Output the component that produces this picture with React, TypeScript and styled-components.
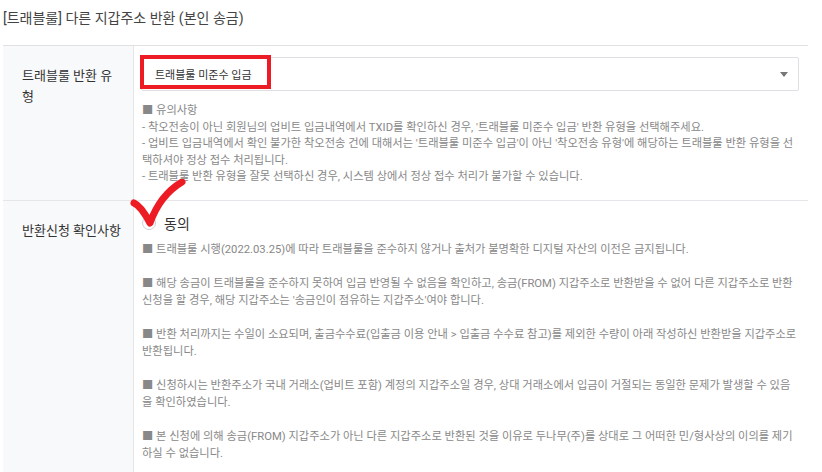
import React from 'react';
import styled, { createGlobalStyle } from 'styled-components';

const GlobalStyle = createGlobalStyle`
  body {
    margin: 0;
    background: #fff;
    font-family: Roboto, 'Noto Sans CJK KR', sans-serif;
  }
`;

const Page = styled.div`
  padding: 9px 14px 0 3px;
`;

const Title = styled.h1`
  margin: 0 0 18px 0;
  font-size: 14px;
  font-weight: 400;
  line-height: 18px;
  color: #444;
`;

const Table = styled.div`
  width: 805px;
  border-top: 1px solid #e1e1e4;
`;

const Row = styled.div`
  display: grid;
  grid-template-columns: 131px 1fr;
  border-bottom: 1px solid #e6e6ea;
`;

const Label = styled.div`
  background: #f8f9fb;
  border-right: 1px solid #e6e6ea;
  padding: 19px 10px 0 19px;
  font-size: 13px;
  line-height: 21px;
  color: #333;
`;

const Cell = styled.div<{ $top: number; $bottom: number }>`
  position: relative;
  padding: ${p => p.$top}px 9px ${p => p.$bottom}px 7px;
`;

const SelectBox = styled.div`
  position: relative;
  display: flex;
  align-items: center;
  justify-content: space-between;
  height: 32px;
  padding: 0 10px 0 13px;
  border: 1px solid #dedee3;
  border-radius: 2px;
  font-size: 11px;
  color: #333;
`;

const Caret = styled.span`
  width: 0;
  height: 0;
  border-left: 4px solid transparent;
  border-right: 4px solid transparent;
  border-top: 5px solid #777;
`;

const Highlight = styled.div`
  position: absolute;
  left: -2px;
  top: -3px;
  width: 123px;
  height: 26px;
  border: 4px solid #ed1c24;
  pointer-events: none;
`;

const Notes = styled.div`
  margin-top: 12px;
  font-size: 11.25px;
  line-height: 16.5px;
  color: #888;
  padding-left: 1px;
`;

const Agree = styled.label`
  display: flex;
  align-items: center;
  gap: 8px;
  height: 20px;
  padding-left: 1px;
  font-size: 14px;
  color: #333;
`;

const Radio = styled.span`
  width: 14px;
  height: 14px;
  border-radius: 50%;
  border: 1px solid #cfcfd4;
  background: #fff;
  box-sizing: border-box;
`;

const Para = styled.p`
  margin: 8px 0 17px 0;
  padding-left: 1px;
  font-size: 11.25px;
  line-height: 17px;
  color: #888;
  & + & {
    margin-top: 0;
  }
`;

const Check = styled.svg`
  position: absolute;
  left: -6px;
  top: -22px;
  pointer-events: none;
`;

const paragraphs = [
  '■ 트래블룰 시행(2022.03.25)에 따라 트래블룰을 준수하지 않거나 출처가 불명확한 디지털 자산의 이전은 금지됩니다.',
  "■ 해당 송금이 트래블룰을 준수하지 못하여 입금 반영될 수 없음을 확인하고, 송금(FROM) 지갑주소로 반환받을 수 없어 다른 지갑주소로 반환 신청을 할 경우, 해당 지갑주소는 '송금인이 점유하는 지갑주소'여야 합니다.",
  '■ 반환 처리까지는 수일이 소요되며, 출금수수료(입출금 이용 안내 > 입출금 수수료 참고)를 제외한 수량이 아래 작성하신 반환받을 지갑주소로 반환됩니다.',
  '■ 신청하시는 반환주소가 국내 거래소(업비트 포함) 계정의 지갑주소일 경우, 상대 거래소에서 입금이 거절되는 동일한 문제가 발생할 수 있음을 확인하였습니다.',
  '■ 본 신청에 의해 송금(FROM) 지갑주소가 아닌 다른 지갑주소로 반환된 것을 이유로 두나무(주)를 상대로 그 어떠한 민/형사상의 이의를 제기하실 수 없습니다.',
];

const App = () => (
  <Page>
    <GlobalStyle />
    <Title>[트래블룰] 다른 지갑주소 반환 (본인 송금)</Title>
    <Table>
      <Row>
        <Label>트래블룰 반환 유형</Label>
        <Cell $top={11} $bottom={14}>
          <SelectBox>
            <span>트래블룰 미준수 입금</span>
            <Caret />
            <Highlight />
          </SelectBox>
          <Notes>
            ■ 유의사항
            <br />
            - 착오전송이 아닌 회원님의 업비트 입금내역에서 TXID를 확인하신 경우, '트래블룰 미준수 입금' 반환 유형을 선택해주세요.
            <br />
            - 업비트 입금내역에서 확인 불가한 착오전송 건에 대해서는 '트래블룰 미준수 입금'이 아닌 '착오전송 유형'에 해당하는 트래블룰 반환 유형을 선택하셔야 정상 접수 처리됩니다.
            <br />
            - 트래블룰 반환 유형을 잘못 선택하신 경우, 시스템 상에서 정상 접수 처리가 불가할 수 있습니다.
          </Notes>
        </Cell>
      </Row>
      <Row>
        <Label>반환신청 확인사항</Label>
        <Cell $top={12} $bottom={0}>
          <Agree>
            <Radio />
            동의
          </Agree>
          {paragraphs.map(text => (
            <Para key={text}>{text}</Para>
          ))}
          <Check width="60" height="50" viewBox="0 0 60 50">
            <path
              d="M6 24 Q13 27 22 44 Q32 16 54 3"
              fill="none"
              stroke="#ed1c24"
              strokeWidth="7"
              strokeLinecap="round"
              strokeLinejoin="round"
            />
          </Check>
        </Cell>
      </Row>
    </Table>
  </Page>
);

export default App;
